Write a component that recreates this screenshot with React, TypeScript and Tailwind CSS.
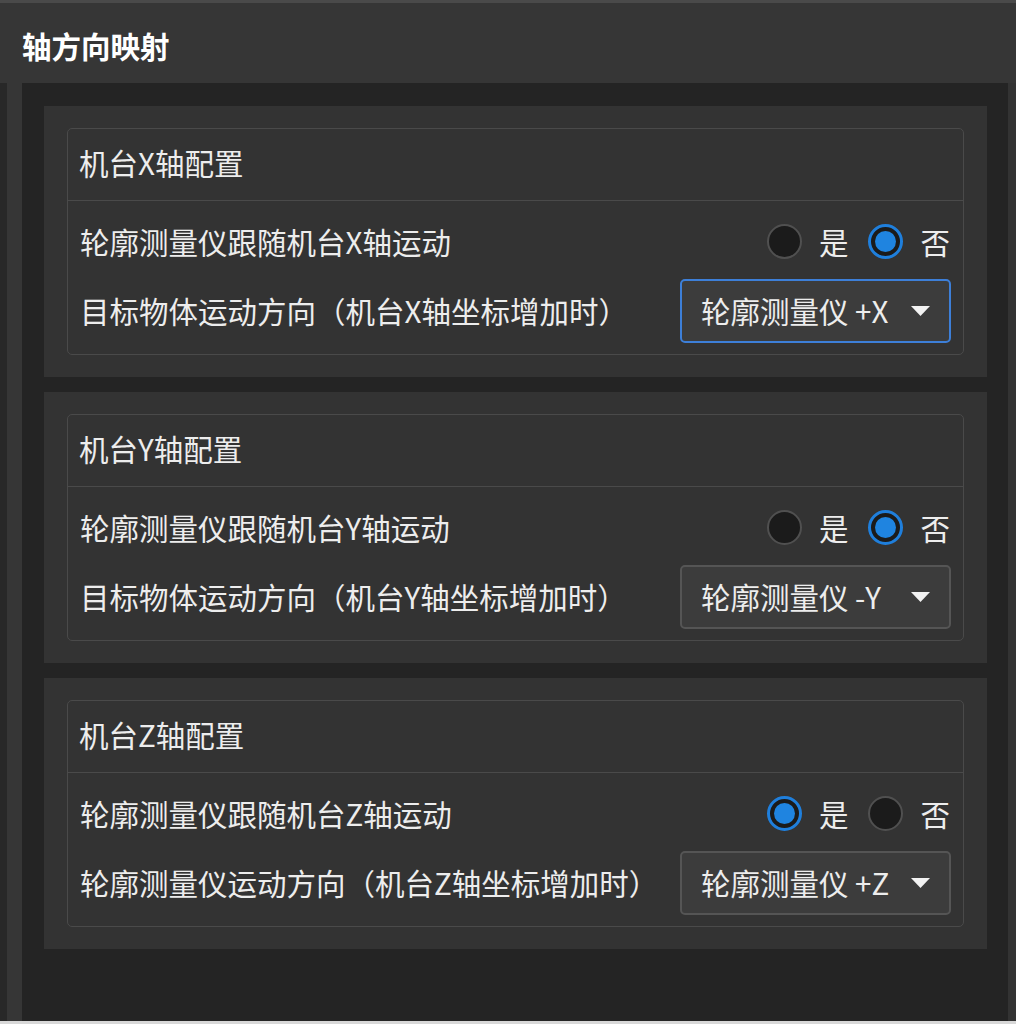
import React from "react";

type Section = {
  title: string;
  followLabel: string;
  dirLabel: string;
  follow: boolean;
  value: string;
  focused?: boolean;
};

const sections: Section[] = [
  {
    title: "机台X轴配置",
    followLabel: "轮廓测量仪跟随机台X轴运动",
    dirLabel: "目标物体运动方向（机台X轴坐标增加时）",
    follow: false,
    value: "轮廓测量仪 +X",
    focused: true,
  },
  {
    title: "机台Y轴配置",
    followLabel: "轮廓测量仪跟随机台Y轴运动",
    dirLabel: "目标物体运动方向（机台Y轴坐标增加时）",
    follow: false,
    value: "轮廓测量仪 -Y",
  },
  {
    title: "机台Z轴配置",
    followLabel: "轮廓测量仪跟随机台Z轴运动",
    dirLabel: "轮廓测量仪运动方向（机台Z轴坐标增加时）",
    follow: true,
    value: "轮廓测量仪 +Z",
  },
];

const Radio = ({ checked, label }: { checked: boolean; label: string }) => (
  <div className="flex items-center gap-[17px]">
    {checked ? (
      <span className="w-[35px] h-[35px] rounded-full border-[3px] border-[#1f7fdc] bg-[#1b1b1b] flex items-center justify-center">
        <span className="w-[21px] h-[21px] rounded-full bg-[#1f84e0]" />
      </span>
    ) : (
      <span className="w-[35px] h-[35px] rounded-full border-2 border-[#505050] bg-[#1b1b1b]" />
    )}
    <span className="leading-none">{label}</span>
  </div>
);

const AxisCard = ({ s }: { s: Section }) => (
  <div className="bg-[#333333] px-[23px] py-[22px]">
    <div className="border border-[#4a4a4a] rounded-[5px]">
      <div className="h-[72px] flex items-center px-[11px] pb-[4px] border-b border-[#4a4a4a] leading-none">
        {s.title}
      </div>
      <div className="px-[12px] pt-[23px] pb-[11px] flex flex-col gap-[20px]">
        <div className="h-[35px] flex items-center justify-between">
          <span className="leading-none">{s.followLabel}</span>
          <div className="flex items-center gap-[20px] pr-[1px]">
            <Radio checked={s.follow} label="是" />
            <Radio checked={!s.follow} label="否" />
          </div>
        </div>
        <div className="flex items-center justify-between">
          <span className="leading-none">{s.dirLabel}</span>
          <div
            className={
              s.focused
                ? "w-[271px] h-[64px] rounded-[5px] border-2 border-[#3d7fd8] bg-[#3c3c3c] flex items-center justify-between pl-[19px] pr-[19px]"
                : "w-[271px] h-[64px] rounded-[5px] border-2 border-[#555555] bg-[#3c3c3c] flex items-center justify-between pl-[19px] pr-[19px]"
            }
          >
            <span className="leading-none">{s.value}</span>
            <svg width="19" height="10" viewBox="0 0 19 10">
              <path d="M0 0 L19 0 L9.5 10 Z" fill="#f2f2f2" />
            </svg>
          </div>
        </div>
      </div>
    </div>
  </div>
);

export default function App() {
  return (
    <div
      className="w-[1016px] h-[1024px] bg-[#242424] text-[#ededed] text-[29.5px] flex flex-col overflow-hidden"
      style={{ fontFamily: '"Noto Sans CJK SC", "Noto Sans", sans-serif' }}
    >
      <div className="h-[3px] bg-[#4a4a4a]" />
      <div className="h-[80px] bg-[#363636] flex items-center px-[22px] pt-[6px] font-bold text-white leading-none">
        轴方向映射
      </div>
      <div className="flex-1 flex">
        <div className="w-[7px] bg-[#282828]" />
        <div className="w-[15px] bg-[#363636]" />
        <div className="flex-1 bg-[#242424] pl-[22px] pr-[21px] pt-[23px] flex flex-col gap-[15px]">
          {sections.map((s) => (
            <AxisCard key={s.title} s={s} />
          ))}
        </div>
        <div className="w-[8px] bg-[#333333]" />
      </div>
      <div className="h-[3px] bg-[#d8d8d8]" />
    </div>
  );
}
